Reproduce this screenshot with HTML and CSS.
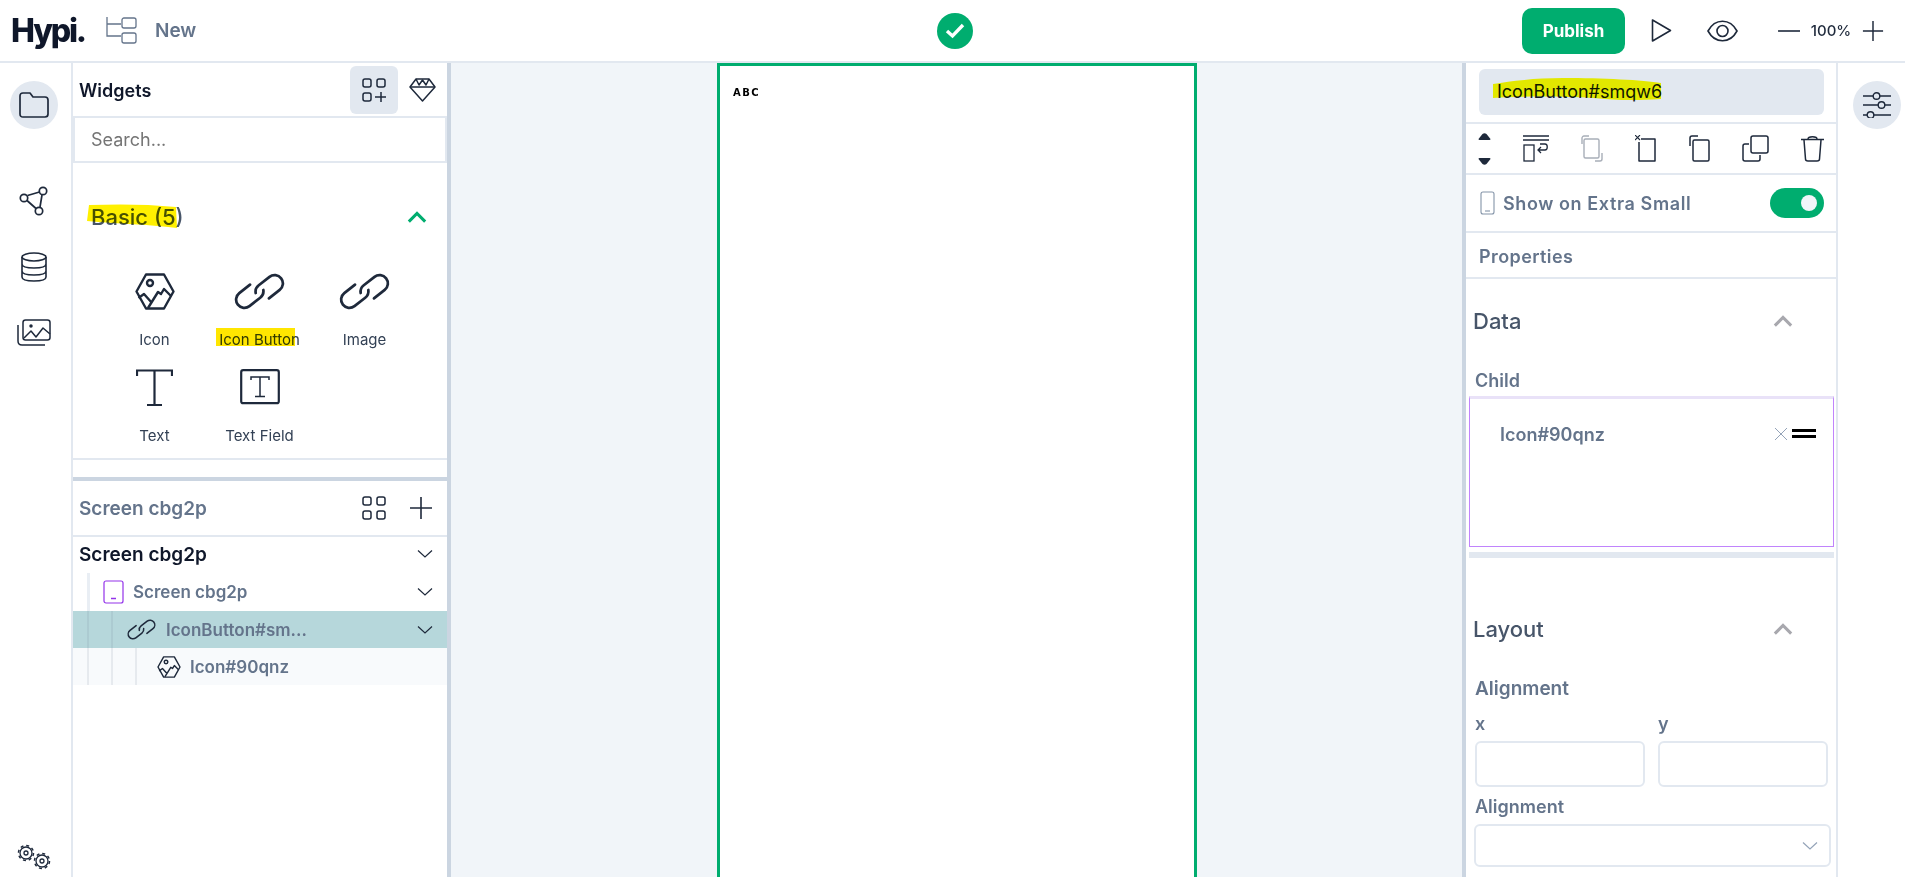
FILE: index.html
```html
<!DOCTYPE html>
<html lang="en">
<head>
  <meta charset="UTF-8">
  <title>Hypi</title>
  <link rel="stylesheet" href="styles.css">
</head>
<body>
  <svg class="defs" aria-hidden="true">
    <symbol id="i-link" viewBox="0 0 52 38">
      <g fill="none" stroke="currentColor" stroke-width="2.800" stroke-linecap="round">
        <path transform="translate(16 23) rotate(-38)" d="M7 -8.500H-7A8.500 8.500 0 0 0 -7 8.500H7A8.500 8.500 0 0 0 14.400 4.200"/>
        <path transform="translate(36 15) rotate(-38)" d="M-7 8.500H7A8.500 8.500 0 0 0 7 -8.500H-7A8.500 8.500 0 0 0 -14.400 -4.200"/>
      </g>
    </symbol>
    <symbol id="i-hex" viewBox="0 0 40 37">
      <g fill="none" stroke="currentColor" stroke-width="2.400" stroke-linejoin="round">
        <path d="M11 1.500H29L38.500 18.500L29 35.500H11L1.500 18.500Z"/>
        <circle cx="15" cy="10" r="3"/>
        <path d="M3.500 25L9 21L17 30M13 35L23 19L26 21L29 16L36 23"/>
      </g>
    </symbol>
    <symbol id="i-chev" viewBox="0 0 16 10">
      <path d="M1 1.500L8 8L15 1.500" fill="none" stroke="currentColor" stroke-width="1.200"/>
    </symbol>
    <symbol id="i-up" viewBox="0 0 18 12">
      <path d="M2 10L9 3L16 10" fill="none" stroke="currentColor" stroke-width="2.600"/>
    </symbol>
    <symbol id="i-plus" viewBox="0 0 24 24">
      <path d="M12 1V23M1 12H23" fill="none" stroke="currentColor" stroke-width="1.600"/>
    </symbol>
  </svg>

  <div class="app">
    <header class="topbar">
      <div class="topbar-left">
        <span class="logo">Hypi.</span>
        <svg class="ic-tree" width="31" height="29" viewBox="0 0 31 29" fill="none" stroke="currentColor" stroke-width="1.300">
          <path d="M1 1V20H15M1 8H15"/>
          <rect x="16" y="2" width="14" height="10" rx="2"/>
          <rect x="16" y="17" width="14" height="10" rx="2"/>
        </svg>
        <span class="project-name">New</span>
      </div>
      <div class="status-dot">
        <svg width="20" height="16" viewBox="0 0 20 16" fill="none" stroke="#fff" stroke-width="3.400"><path d="M2 8L7.500 13L18 2"/></svg>
      </div>
      <div class="topbar-right">
        <button class="publish">Publish</button>
        <svg class="ic-play" width="21" height="25" viewBox="0 0 21 25" fill="none" stroke="currentColor" stroke-width="1.600" stroke-linejoin="round"><path d="M1.500 2V23L19.500 12.500Z"/></svg>
        <svg class="ic-eye" width="31" height="24" viewBox="0 0 31 24" fill="none" stroke="currentColor" stroke-width="1.600"><path d="M1 12C8 -1 23 -1 30 12C23 25 8 25 1 12Z"/><circle cx="15.500" cy="12" r="5.500"/></svg>
        <div class="zoom-ctl">
          <svg width="22" height="22" viewBox="0 0 22 22"><path d="M0 11H22" stroke="currentColor" stroke-width="1.600"/></svg>
          <span>100%</span>
          <svg width="22" height="22"><use href="#i-plus"/></svg>
        </div>
      </div>
    </header>

    <div class="main">
      <nav class="rail">
        <div class="rail-btn">
          <svg width="30" height="26" viewBox="0 0 30 26" fill="none" stroke="currentColor" stroke-width="1.700" stroke-linejoin="round"><path d="M1 4C1 2 2 1 4 1H11L14 5H26C28 5 29 6 29 8V22C29 24 28 25 26 25H4C2 25 1 24 1 22Z"/></svg>
        </div>
        <svg class="rail-share" width="29" height="30" viewBox="0 0 29 30" fill="none" stroke="currentColor" stroke-width="1.700"><circle cx="5" cy="12" r="3.700"/><circle cx="24" cy="5" r="3.700"/><circle cx="20" cy="25" r="3.700"/><path d="M8.500 9.500L20.500 6M8 14.500L17 22.500M23 9L21 21"/></svg>
        <svg class="rail-db" width="26" height="30" viewBox="0 0 26 30" fill="none" stroke="currentColor" stroke-width="1.600"><ellipse cx="13" cy="5" rx="12" ry="4"/><path d="M1 5V25C1 27.500 6 29 13 29C20 29 25 27.500 25 25V5M1 12C1 14.500 6 16 13 16C20 16 25 14.500 25 12M1 19C1 21.500 6 23 13 23C20 23 25 21.500 25 19"/></svg>
        <svg class="rail-img" width="34" height="27" viewBox="0 0 34 27" fill="none" stroke="currentColor" stroke-width="1.500" stroke-linejoin="round"><rect x="6" y="1" width="27" height="20" rx="2.500"/><path d="M1 6V22C1 24.500 2.500 26 5 26H28M7 19L14 12L19 18L26 9L33 15"/><circle cx="14" cy="7" r="1" fill="currentColor"/></svg>
        <svg class="rail-gears" width="34" height="26" viewBox="0 0 34 26" fill="none" stroke="currentColor">
          <circle cx="9" cy="9" r="6" stroke-width="1.300"/><circle cx="9" cy="9" r="7.500" stroke-width="1.500" stroke-dasharray="3 2.890"/><circle cx="9" cy="9" r="2" stroke-width="1.300"/>
          <circle cx="25" cy="17" r="6" stroke-width="1.300"/><circle cx="25" cy="17" r="7.500" stroke-width="1.500" stroke-dasharray="3 2.890"/><circle cx="25" cy="17" r="2" stroke-width="1.300"/>
        </svg>
      </nav>

      <aside class="left-pane">
        <section class="widgets">
          <div class="widgets-head">
            <span class="widgets-title">Widgets</span>
            <div class="tab-active">
              <svg width="24" height="24" viewBox="0 0 24 24" fill="none" stroke="currentColor" stroke-width="1.500"><rect x="1" y="1" width="8" height="8" rx="2"/><rect x="15" y="1" width="8" height="8" rx="2"/><rect x="1" y="15" width="8" height="8" rx="2"/><path d="M19 14V24M13 19H24"/></svg>
            </div>
            <svg class="ic-gem" width="27" height="24" viewBox="0 0 27 24" fill="none" stroke="currentColor" stroke-width="1.500" stroke-linejoin="round"><path d="M7 1H20L26 9L13.500 23L1 9Z"/><path d="M1 9H26M7 1L10 7L13.500 2L17 7L20 1"/></svg>
          </div>
          <input class="search" placeholder="Search...">
          <div class="group-head">
            <span class="group-title">
              <svg class="stroke" width="92" height="26" viewBox="0 0 92 26"><path d="M2 1C30 0 60 0 89 3L90 24C60 20 30 20 0 17Z"/></svg>
              Basic (5)
            </span>
            <svg class="group-chev" width="22" height="14"><use href="#i-up"/></svg>
          </div>
          <div class="widget-grid">
            <div class="widget"><svg width="40" height="37"><use href="#i-hex"/></svg><span>Icon</span></div>
            <div class="widget"><svg width="51" height="37"><use href="#i-link"/></svg><span class="mark">Icon Button</span></div>
            <div class="widget"><svg width="51" height="37"><use href="#i-link"/></svg><span>Image</span></div>
            <div class="widget">
              <svg width="37" height="37" viewBox="0 0 37 37" fill="none" stroke="currentColor" stroke-width="2.200"><path d="M1 7V1.500H36V7M18.500 1.500V36M11 36H26"/></svg>
              <span>Text</span>
            </div>
            <div class="widget">
              <svg width="40" height="37" viewBox="0 0 40 37" fill="none" stroke="currentColor"><rect x="1.200" y="1.200" width="37.600" height="33" rx="2" stroke-width="2.200"/><path d="M11 11V8H29V11M20 8V27.500M15 27.500H25" stroke-width="1.500"/></svg>
              <span>Text Field</span>
            </div>
          </div>
        </section>

        <section class="tree">
          <div class="tree-head">
            <span>Screen cbg2p</span>
            <svg class="ic-grid" width="24" height="24" viewBox="0 0 24 24" fill="none" stroke="currentColor" stroke-width="1.500"><rect x="1" y="1" width="8" height="8" rx="2"/><rect x="15" y="1" width="8" height="8" rx="2"/><rect x="1" y="15" width="8" height="8" rx="2"/><rect x="15" y="15" width="8" height="8" rx="2"/></svg>
            <svg class="ic-add" width="24" height="24"><use href="#i-plus"/></svg>
          </div>
          <div class="tree-row root"><span>Screen cbg2p</span><svg width="16" height="10"><use href="#i-chev"/></svg></div>
          <div class="tree-row lvl1">
            <svg class="ic-device" width="21" height="24" viewBox="0 0 21 24" fill="none" stroke="currentColor" stroke-width="1.200"><rect x="1" y="1" width="19" height="22" rx="2"/><path d="M8 18.500H13" stroke-width="1.500"/></svg>
            <span>Screen cbg2p</span><svg width="16" height="10"><use href="#i-chev"/></svg>
          </div>
          <div class="tree-row lvl2 selected">
            <svg width="29" height="21"><use href="#i-link"/></svg>
            <span>IconButton#sm...</span><svg width="16" height="10"><use href="#i-chev"/></svg>
          </div>
          <div class="tree-row lvl3 child-row">
            <svg width="24" height="22"><use href="#i-hex"/></svg>
            <span>Icon#90qnz</span>
          </div>
        </section>
      </aside>

      <main class="canvas">
        <div class="frame"><span class="abc">ABC</span></div>
      </main>

      <aside class="props">
        <div class="name-box">
          <span class="name-text">
            <svg class="stroke" width="170" height="26" viewBox="0 0 170 26"><path d="M0 6C20 3 40 0 70 0C110 0 150 2 168 5V21C140 23 120 22 100 20C70 18 30 18 0 20Z"/></svg>
            IconButton#smqw6
          </span>
        </div>
        <div class="tools">
          <div class="order">
            <svg width="13" height="7" viewBox="0 0 13 7"><path d="M0.500 6L4.500 1Q6.500 -0.500 8.500 1L12.500 6Q12.500 7 11.500 7H1.500Q0.500 7 0.500 6Z" fill="currentColor"/></svg>
            <svg width="13" height="7" viewBox="0 0 13 7"><path d="M0.500 1L4.500 6Q6.500 7.500 8.500 6L12.500 1Q12.500 0 11.500 0H1.500Q0.500 0 0.500 1Z" fill="currentColor"/></svg>
          </div>
          <svg width="26" height="27" viewBox="0 0 26 27" fill="none" stroke="currentColor" stroke-width="1.300"><path d="M0 1H26M0 5H26"/><rect x="1" y="10" width="10" height="16"/><path d="M17 9H22C25 9 25 15 22 15H15M18 12L15 15L18 18"/></svg>
          <svg class="tool-off" width="22" height="27" viewBox="0 0 22 27" fill="none" stroke="currentColor" stroke-width="1.400"><rect x="3" y="4" width="15" height="19" rx="1.500"/><path d="M1 9V3C1 2 2 1 3 1H8M21 18V24C21 25 20 26 19 26H14"/></svg>
          <svg width="21" height="27" viewBox="0 0 21 27" fill="none" stroke="currentColor" stroke-width="1.500"><path d="M6 4H20V26H4V7" stroke-linejoin="round"/><path d="M0 0L5 5M5 0L0 5" stroke-width="1.100"/></svg>
          <svg width="21" height="27" viewBox="0 0 21 27" fill="none" stroke="currentColor" stroke-width="1.500"><rect x="4" y="5" width="16" height="21" rx="1.500"/><path d="M1 11V3C1 2 2 1 3 1H9"/></svg>
          <svg width="27" height="27" viewBox="0 0 27 27" fill="none" stroke="currentColor" stroke-width="1.500"><rect x="9" y="1" width="17" height="17" rx="2"/><path d="M7 9H3C2 9 1 10 1 11V24C1 25 2 26 3 26H16C17 26 18 25 18 24V20"/></svg>
          <svg width="23" height="27" viewBox="0 0 23 27" fill="none" stroke="currentColor" stroke-width="1.500"><path d="M0 4.500H23M7 4C7 1 16 1 16 4M3 5L4.500 24C4.500 25.500 5.500 26 7 26H16C17.500 26 18.500 25.500 18.500 24L20 5"/></svg>
        </div>
        <div class="show-row">
          <svg class="ic-phone" width="15" height="24" viewBox="0 0 15 24" fill="none" stroke="currentColor" stroke-width="1.100"><rect x="1" y="1" width="13" height="22" rx="2"/><path d="M5 20H10"/></svg>
          <span>Show on Extra Small</span>
          <div class="toggle"><i></i></div>
        </div>
        <div class="props-title">Properties</div>

        <div class="sec-head"><span>Data</span><svg width="22" height="14"><use href="#i-up"/></svg></div>
        <div class="field-label child-label">Child</div>
        <div class="drop-box">
          <span>Icon#90qnz</span>
          <svg class="ic-x" width="14" height="14" viewBox="0 0 14 14" fill="none" stroke="currentColor"><path d="M1 1L13 13M13 1L1 13"/></svg>
          <div class="handle"></div>
        </div>
        <div class="resize-bar"></div>

        <div class="sec-head layout-head"><span>Layout</span><svg width="22" height="14"><use href="#i-up"/></svg></div>
        <div class="field-label align-label">Alignment</div>
        <div class="xy">
          <label class="field-label">x<input></label>
          <label class="field-label">y<input></label>
        </div>
        <div class="field-label align2-label">Alignment</div>
        <div class="select-box"><svg width="16" height="10"><use href="#i-chev"/></svg></div>
      </aside>

      <nav class="rail-right">
        <div class="rail-btn">
          <svg width="30" height="26" viewBox="0 0 30 26" fill="none" stroke="currentColor" stroke-width="1.400"><path d="M1 4H11M18 4H29M1 13H16M23 13H29M1 23H5M12 23H29"/><circle cx="14.500" cy="4" r="3.300"/><circle cx="19.500" cy="13" r="3.300"/><circle cx="8.500" cy="23" r="3.300"/></svg>
        </div>
      </nav>
    </div>
  </div>
</body>
</html>
```

FILE: styles.css
```css
/* page */
* {
  box-sizing: border-box;
}
html, body {
  margin: 0;
  height: 100%;
  overflow: hidden;
}
body {
  font-family: Inter, "Noto Sans", sans-serif;
  color: #1e293b;
  background: #fff;
}
.defs {
  display: none;
}
.app {
  display: flex;
  flex-direction: column;
  height: 100vh;
}

/* top bar */
.topbar {
  display: flex;
  align-items: center;
  height: 63px;
  flex: none;
  border-bottom: 2px solid #e2e8f0;
}
.topbar-left {
  width: 937px;
  display: flex;
  align-items: center;
  padding-left: 11px;
}
.logo {
  font-size: 32px;
  font-weight: 800;
  color: #0f172a;
  letter-spacing: -2.200px;
  width: 95px;
}
.ic-tree {
  color: #64748b;
}
.project-name {
  margin-left: 18px;
  font-size: 19px;
  font-weight: 600;
  color: #64748b;
}
.status-dot {
  width: 36px;
  height: 36px;
  border-radius: 50%;
  background: #00ad6f;
  display: flex;
  align-items: center;
  justify-content: center;
}
.topbar-right {
  flex: 1;
  display: flex;
  align-items: center;
  padding-left: 549px;
}
.publish {
  width: 103px;
  height: 46px;
  border: none;
  border-radius: 10px;
  background: #00ad6f;
  color: #fff;
  font: 700 17px Inter, sans-serif;
}
.ic-play {
  margin-left: 26px;
}
.ic-eye {
  margin-left: 35px;
}
.zoom-ctl {
  display: flex;
  align-items: center;
  margin-left: 40px;
  font-size: 15px;
  font-weight: 500;
  color: #1e293b;
}
.zoom-ctl span {
  width: 62px;
  text-align: center;
}

/* main columns */
.main {
  flex: 1;
  display: flex;
  min-height: 0;
}
.rail {
  width: 73px;
  flex: none;
  display: flex;
  flex-direction: column;
  align-items: center;
  padding: 18px 4px 7px 0;
  border-right: 2px solid #e2e8f0;
}
.rail-btn {
  width: 48px;
  height: 48px;
  flex: none;
  border-radius: 50%;
  background: #e2e8f0;
  display: flex;
  align-items: center;
  justify-content: center;
}
.rail-share {
  margin-top: 57px;
}
.rail-db {
  margin-top: 36px;
}
.rail-img {
  margin-top: 37px;
}
.rail-gears {
  margin-top: auto;
}

/* widgets */
.left-pane {
  width: 378px;
  flex: none;
  border-right: 4px solid #cbd5e1;
  display: flex;
  flex-direction: column;
}
.widgets {
  height: 418px;
  flex: none;
  border-bottom: 4px solid #cbd5e1;
}
.widgets-head {
  height: 55px;
  display: flex;
  align-items: center;
  padding: 0 11px 0 6px;
  border-bottom: 2px solid #e2e8f0;
}
.widgets-title {
  flex: 1;
  font-size: 18px;
  font-weight: 600;
  color: #0f172a;
  padding-top: 1px;
}
.tab-active {
  width: 48px;
  height: 48px;
  border-radius: 6px;
  background: #e2e8f0;
  display: flex;
  align-items: center;
  justify-content: center;
}
.ic-gem {
  margin-left: 11px;
}
.search {
  display: block;
  width: 100%;
  height: 45px;
  border: 2px solid #e2e8f0;
  border-top: none;
  padding: 0 16px;
  font: 400 18px Inter, sans-serif;
  outline: none;
}
.search::placeholder {
  color: #757575;
}
.group-head {
  display: flex;
  align-items: center;
  justify-content: space-between;
  height: 110px;
  padding: 0 19px 3px 18px;
}
.group-title {
  position: relative;
  font-size: 22px;
  font-weight: 500;
  color: #475569;
}
.stroke {
  position: absolute;
  left: -4px;
  top: 0;
  fill: #fff000;
  mix-blend-mode: multiply;
}
.group-chev {
  color: #00ad6f;
}
.widget-grid {
  display: grid;
  grid-template-columns: repeat(3, 105px);
  grid-auto-rows: 96px;
  height: 187px;
  padding-left: 29px;
  border-bottom: 2px solid #e2e8f0;
}
.widget {
  display: flex;
  flex-direction: column;
  align-items: center;
  font-size: 15px;
  color: #334155;
}
.widget svg {
  color: #1e293b;
  flex: none;
}
.widget span {
  margin-top: 20px;
  line-height: 20px;
}
.mark {
  position: relative;
}
.mark::before {
  content: "";
  position: absolute;
  left: -3px;
  right: 5px;
  top: -2px;
  bottom: 4px;
  background: #ffe600;
  mix-blend-mode: multiply;
}

/* tree */
.tree {
  flex: 1;
  position: relative;
}
.tree-head {
  height: 56px;
  display: flex;
  align-items: center;
  padding: 0 14px 0 6px;
  border-bottom: 2px solid #e2e8f0;
  font-size: 19px;
  font-weight: 600;
  color: #64748b;
}
.tree-head span {
  flex: 1;
}
.ic-grid {
  margin-right: 23px;
  color: #1e293b;
}
.ic-add {
  color: #1e293b;
}
.tree-row {
  display: flex;
  align-items: center;
  height: 37px;
  padding-right: 14px;
  font-size: 17px;
  font-weight: 600;
  color: #64748b;
}
.tree-row span {
  flex: 1;
}
.tree-row > svg:last-child {
  color: #1e293b;
}
.root {
  height: 36px;
  font-size: 19px;
  color: #0f172a;
  padding: 0 14px 2px 6px;
}
.lvl1 {
  height: 38px;
  padding-left: 30px;
  background: linear-gradient(#e9eef4, #e9eef4) 14px 0 / 3px 100% no-repeat;
}
.lvl1 svg:first-child {
  margin-right: 9px;
}
.ic-device {
  color: #9333ea;
}
.lvl2 {
  padding-left: 54px;
}
.lvl2 svg:first-child {
  margin-right: 10px;
  color: #1e293b;
}
.selected {
  background-color: #b6d7db;
}
.lvl3 {
  padding-left: 84px;
}
.lvl3 svg:first-child {
  margin-right: 9px;
  color: #1e293b;
}
.child-row {
  background-color: #f8fafc;
}
.lvl2, .lvl3 {
  background-image:
    linear-gradient(rgba(100,116,139,.12), rgba(100,116,139,.12)),
    linear-gradient(rgba(100,116,139,.12), rgba(100,116,139,.12)),
    linear-gradient(rgba(100,116,139,.12), rgba(100,116,139,.12));
  background-size: 2px 100%, 2px 100%, 2px 100%;
  background-position: 14px 0, 38px 0, 62px 0;
  background-repeat: no-repeat;
}
.lvl2 {
  background-size: 2px 100%, 2px 100%, 0 0;
}

/* canvas */
.canvas {
  width: 1011px;
  flex: none;
  background: #f1f5f9;
  padding-left: 266px;
}
.frame {
  width: 480px;
  height: 100%;
  background: #fff;
  border: 3px solid #00ad6f;
  border-bottom: none;
  padding: 20px 13px;
}
.abc {
  display: block;
  font: 700 10px/14px "DejaVu Sans", sans-serif;
  letter-spacing: 1.500px;
  color: #000;
}

/* properties */
.props {
  width: 376px;
  flex: none;
  border-left: 4px solid #cbd5e1;
  border-right: 2px solid #e2e8f0;
  overflow: hidden;
}
.name-box {
  height: 61px;
  padding: 6px 12px 0 13px;
  border-bottom: 2px solid #e2e8f0;
}
.name-text {
  position: relative;
  display: block;
  height: 46px;
  line-height: 46px;
  padding-left: 18px;
  border-radius: 6px;
  background: #e2e8f0;
  font-size: 18px;
  color: #0f172a;
}
.name-text .stroke {
  left: 14px;
  top: 9px;
  width: 170px;
  fill: #ffff00;
}
.tools {
  height: 51px;
  display: flex;
  align-items: center;
  justify-content: space-between;
  padding: 0 12px;
  border-bottom: 2px solid #e2e8f0;
  color: #1e293b;
}
.order {
  display: flex;
  flex-direction: column;
  gap: 18px;
}
.tool-off {
  color: #a8aeb8;
}
.show-row {
  height: 58px;
  display: flex;
  align-items: center;
  padding: 0 12px 0 14px;
  border-bottom: 2px solid #e2e8f0;
  font-size: 18px;
  font-weight: 600;
  letter-spacing: .6px;
  color: #64748b;
}
.show-row span {
  flex: 1;
  margin-left: 8px;
}
.ic-phone {
  color: #8494a8;
}
.toggle {
  width: 54px;
  height: 30px;
  border-radius: 15px;
  background: #00ad6f;
  display: flex;
  align-items: center;
  justify-content: flex-end;
  padding-right: 7px;
}
.toggle i {
  width: 16px;
  height: 16px;
  border-radius: 50%;
  background: #f1f5f9;
}
.props-title {
  height: 46px;
  line-height: 48px;
  padding-left: 13px;
  border-bottom: 2px solid #e2e8f0;
  font-size: 18px;
  font-weight: 600;
  letter-spacing: .4px;
  color: #64748b;
}
.sec-head {
  display: flex;
  align-items: center;
  justify-content: space-between;
  height: 30px;
  margin-top: 27px;
  padding: 0 42px 0 7px;
  font-size: 22px;
  font-weight: 500;
  color: #475569;
}
.sec-head svg {
  color: #a8a8ae;
}
.field-label {
  display: block;
  font-size: 18px;
  font-weight: 600;
  color: #64748b;
  line-height: 22px;
}
.child-label {
  margin: 34px 0 0 9px;
}
.drop-box {
  height: 151px;
  margin: 4px 2px 0 3px;
  position: relative;
  display: flex;
  align-items: flex-start;
  padding: 25px 0 0 30px;
  border: 1px solid #c084fc;
  border-top: 3px solid #e9e2f8;
  font-size: 18px;
  font-weight: 600;
  color: #64748b;
}
.drop-box span {
  flex: 1;
}
.ic-x {
  color: #94a3b8;
  margin: 3px 4px 0 0;
}
.handle {
  width: 24px;
  height: 9px;
  margin: 5px 17px 0 0;
  border-top: 3px solid #000;
  border-bottom: 3px solid #000;
}
.resize-bar {
  height: 6px;
  margin: 5px 2px 0 3px;
  background: #e2e8f0;
}
.layout-head {
  margin-top: 56px;
}
.align-label {
  margin: 34px 0 0 9px;
  font-size: 19px;
}
.xy {
  display: flex;
  gap: 13px;
  margin: 13px 0 0 9px;
}
.xy label {
  width: 170px;
  text-indent: 0;
}
.xy input {
  display: block;
  width: 170px;
  height: 46px;
  margin-top: 6px;
  border: 2px solid #e2e8f0;
  border-radius: 6px;
  background: #fff;
}
.align2-label {
  margin: 9px 0 0 9px;
}
.select-box {
  width: 357px;
  height: 43px;
  margin: 6px 0 0 8px;
  display: flex;
  align-items: center;
  justify-content: flex-end;
  padding-right: 11px;
  border: 2px solid #e2e8f0;
  border-radius: 6px;
  color: #94a3b8;
}

.rail-right {
  flex: 1;
  display: flex;
  justify-content: center;
  padding: 18px 0 0 10px;
}
```
